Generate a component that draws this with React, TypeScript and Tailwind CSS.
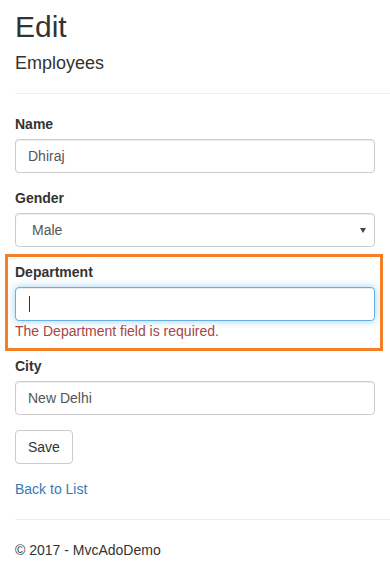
import React from "react";

const font = { fontFamily: '"Liberation Sans", Arial, Helvetica, sans-serif' };

function Field({ label, value }: { label: string; value: string }) {
  return (
    <div className="mb-[15px] flex flex-col">
      <label className="mb-[5px] text-[14px] leading-[20px] font-bold text-[#333]">{label}</label>
      <div className="flex h-[34px] w-[360px] items-center rounded-[4px] border border-[#ccc] bg-white px-[12px] text-[14px] text-[#555] shadow-[inset_0_1px_1px_rgba(0,0,0,0.075)]">
        {value}
      </div>
    </div>
  );
}

export default function App() {
  return (
    <div className="min-h-[576px] bg-white pl-[15px] text-[14px] leading-[20px] text-[#333]" style={font}>
      <h2 className="mt-[10px] text-[30px] leading-[33px] font-normal text-[#333]">Edit</h2>
      <h4 className="mt-[10px] text-[18px] leading-[20px] font-normal text-[#333]">Employees</h4>
      <hr className="mt-[20px] border-0 border-t border-[#eee]" />
      <div className="mt-[20px] flex flex-col">
        <Field label="Name" value="Dhiraj" />
        <div className="mb-[15px] flex flex-col">
          <label className="mb-[5px] text-[14px] leading-[20px] font-bold text-[#333]">Gender</label>
          <div className="flex h-[34px] w-[360px] items-center justify-between rounded-[4px] border border-[#ccc] bg-white pl-[16px] pr-[8px] text-[14px] text-[#555] shadow-[inset_0_1px_1px_rgba(0,0,0,0.075)]">
            <span>Male</span>
            <svg width="6" height="5" viewBox="0 0 6 5" className="mt-[1px]">
              <path d="M0 0 L6 0 L3 5 Z" fill="#444" />
            </svg>
          </div>
        </div>
        <div className="relative mb-[15px] flex w-[360px] flex-col">
          <label className="mb-[5px] text-[14px] leading-[20px] font-bold text-[#333]">Department</label>
          <div className="flex h-[34px] w-[360px] items-center rounded-[4px] border border-[#66afe9] bg-white px-[12px] text-[14px] text-[#555] shadow-[inset_0_1px_1px_rgba(0,0,0,0.075),0_0_8px_rgba(102,175,233,0.6)]">
            <span className="ml-[1px] inline-block h-[16px] w-[1px] bg-[#333]" />
          </div>
          <span className="text-[14px] leading-[20px] text-[#a94442]">The Department field is required.</span>
          <div className="pointer-events-none absolute -top-[8px] -left-[10px] -right-[8px] -bottom-[10px] border-[3px] border-[#f57f26]" />
        </div>
        <Field label="City" value="New Delhi" />
        <div className="mb-[15px]">
          <button className="h-[34px] rounded-[4px] border border-[#ccc] bg-white px-[12px] text-[14px] leading-[20px] text-[#333]">
            Save
          </button>
        </div>
      </div>
      <div>
        <a className="text-[#337ab7]">Back to List</a>
      </div>
      <hr className="mt-[20px] border-0 border-t border-[#eee]" />
      <footer className="mt-[20px]">
        <p>© 2017 - MvcAdoDemo</p>
      </footer>
    </div>
  );
}
